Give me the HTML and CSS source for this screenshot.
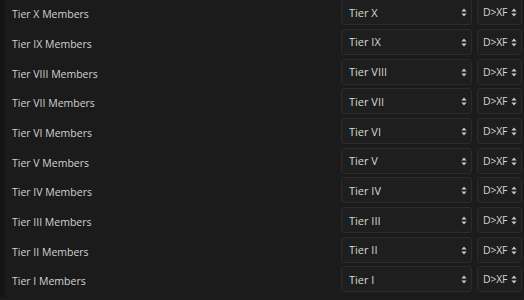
FILE: index.html
```html
<!DOCTYPE html>
<html lang="en">
<head>
  <meta charset="UTF-8" />
  <title>Tier Members</title>
  <link rel="stylesheet" href="styles.css">
</head>
<body>
  <div class="panel">
    <div class="rows" id="rows"></div>
  </div>

  <script>
    const tiers = ['X', 'IX', 'VIII', 'VII', 'VI', 'V', 'IV', 'III', 'II', 'I'];
    const arrows = '<svg class="caret" width="6" height="9" viewBox="0 0 6 9"><path d="M3 0.5 L5.6 3.4 H0.4 Z M3 8.5 L5.6 5.6 H0.4 Z" fill="#c8c8c8"/></svg>';
    const rows = document.getElementById('rows');

    tiers.forEach(t => {
      const row = document.createElement('div');
      row.className = 'row';
      row.innerHTML = `
        <label class="name">Tier ${t} Members</label>
        <div class="pick wide">
          <select><option>Tier ${t}</option></select>
          ${arrows}
        </div>
        <div class="pick narrow">
          <select><option>D&gt;XF</option></select>
          ${arrows}
        </div>
      `;
      rows.appendChild(row);
    });
  </script>
</body>
</html>
```

FILE: styles.css
```css
* {
  box-sizing: border-box;
}
body {
  margin: 0;
  background: #1b1b1b;
  font-family: 'Open Sans', 'Noto Sans', sans-serif;
  font-size: 10.5px;
  color: #d2d2d2;
  overflow: hidden;
}
.panel {
  border-left: 5px solid #141414;
  height: 300px;
}
.rows {
  margin-top: -2.6px;
  padding-left: 7px;
}
.row {
  display: flex;
  align-items: center;
  height: 29.7px;
}
.name {
  flex: 1;
  padding-top: 4px;
}
.pick {
  position: relative;
  height: 26px;
}
.pick.wide {
  width: 131px;
}
.pick.narrow {
  width: 45px;
  margin-left: 5px;
  margin-right: 2px;
}
.pick select {
  appearance: none;
  -webkit-appearance: none;
  width: 100%;
  height: 100%;
  margin: 0;
  background: #1e1e1e;
  border: 1px solid #2b2b2b;
  border-radius: 3px;
  color: #d6d6d6;
  font: inherit;
  font-size: 11px;
  padding: 0 14px 0 7px;
  outline: none;
}
.pick.narrow select {
  padding: 0 8px 0 5px;
  font-size: 10.5px;
  letter-spacing: -0.2px;
}
.caret {
  position: absolute;
  right: 5px;
  top: 9px;
  pointer-events: none;
}
```
